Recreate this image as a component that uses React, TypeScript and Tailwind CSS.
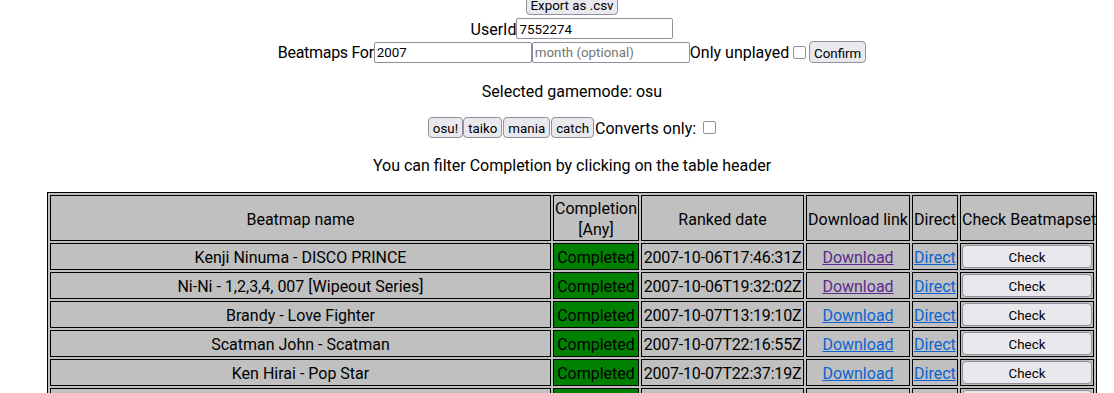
const rows = [
  { name: "Kenji Ninuma - DISCO PRINCE", date: "2007-10-06T17:46:31Z", visited: true },
  { name: "Ni-Ni - 1,2,3,4, 007 [Wipeout Series]", date: "2007-10-06T19:32:02Z", visited: true },
  { name: "Brandy - Love Fighter", date: "2007-10-07T13:19:10Z", visited: false },
  { name: "Scatman John - Scatman", date: "2007-10-07T22:16:55Z", visited: false },
  { name: "Ken Hirai - Pop Star", date: "2007-10-07T22:37:19Z", visited: false },
  { name: "Ayumi Hamasaki - Boys & Girls", date: "2007-10-08T01:05:44Z", visited: false },
];

const btn =
  "bg-[#e9e9ed] border border-[#8f8f9d] rounded-[4px] text-[13.33px] leading-[17px] text-black whitespace-nowrap pt-[2px]";
const inp =
  "border border-[#8f8f9d] rounded-[2px] bg-white h-[21px] text-[13.33px] px-[2px] pt-[1px] text-black placeholder:text-[#757575] outline-none";
const cell = "border border-black px-[1px] pt-[2px] pb-0";

function Box() {
  return <span className="inline-block w-[13px] h-[13px] border border-[#8f8f9d] rounded-[2px] bg-white" />;
}

export default function App() {
  return (
    <div className="w-full h-[393px] overflow-hidden bg-white">
      <div
        className="w-[1144px] text-center text-black text-[16px] leading-[21px]"
        style={{ fontFamily: "Roboto, 'Liberation Sans', sans-serif" }}
      >
        {/* top controls */}
        <div className="-mt-[6px] h-[21px] flex justify-center">
          <button className={btn + " h-[21px] w-[92px] shrink-0"}>Export as .csv</button>
        </div>
        <div className="h-[22px] mt-[3px] flex justify-center items-start">
          <span className="leading-[21px] pt-[1px]">UserId</span>
          <input className={inp + " w-[157px]"} defaultValue="7552274" />
        </div>
        <div className="h-[24px] flex justify-center items-center">
          <span className="tracking-[-0.3px] pt-[1px]">Beatmaps For</span>
          <input className={inp + " w-[158px]"} defaultValue="2007" />
          <input className={inp + " w-[158px]"} placeholder="month (optional)" />
          <span className="pt-[1px]">Only unplayed</span>
          <span className="ml-[4px] mr-[3px] flex">
            <Box />
          </span>
          <button className={btn + " h-[22px] w-[57px] pt-[1px]"}>Confirm</button>
        </div>

        <p className="mt-[17px]">Selected gamemode: osu</p>

        <div className="mt-[15px] h-[21px] flex justify-center items-center">
          <button className={btn + " h-[21px] px-[4px]"}>osu!</button>
          <button className={btn + " h-[21px] px-[4px]"}>taiko</button>
          <button className={btn + " h-[21px] px-[4px] ml-[1px]"}>mania</button>
          <button className={btn + " h-[21px] px-[4px] ml-[1px]"}>catch</button>
          <span className="ml-[1px] pt-[1px]">Converts only:</span>
          <span className="ml-[7px] flex">
            <Box />
          </span>
        </div>

        <p className="mt-[17px]">You can filter Completion by clicking on the table header</p>

        <table className="mt-[16px] mx-auto w-[1050px] table-fixed border border-black border-separate border-spacing-[2px] bg-[#c0c0c0]">
          <thead>
            <tr className="h-[46px]">
              <th className={cell + " w-[501px] font-normal"}>Beatmap name</th>
              <th className={cell + " w-[86px] font-normal"}>Completion [Any]</th>
              <th className={cell + " w-[163px] font-normal whitespace-nowrap"}>Ranked date</th>
              <th className={cell + " w-[104px] font-normal whitespace-nowrap"}>Download link</th>
              <th className={cell + " w-[46px] font-normal whitespace-nowrap"}>Direct</th>
              <th className={cell + " w-[134px] font-normal whitespace-nowrap"}>Check Beatmapset</th>
            </tr>
          </thead>
          <tbody>
            {rows.map((r) => (
              <tr key={r.date} className="h-[27px]">
                <td className={cell + " whitespace-nowrap"}>{r.name}</td>
                <td className={cell + " bg-[#008000] whitespace-nowrap"}>Completed</td>
                <td className={cell + " whitespace-nowrap tracking-[-0.2px]"}>{r.date}</td>
                <td className={cell}>
                  <a
                    href="#"
                    className={"underline " + (r.visited ? "text-[#5b2a8e]" : "text-[#0b63d1]")}
                  >
                    Download
                  </a>
                </td>
                <td className={cell + " text-left whitespace-nowrap"}>
                  <a href="#" className="underline text-[#0b63d1]">
                    Direct
                  </a>
                </td>
                <td className="border border-black p-[1px]">
                  <button className={btn + " w-full h-[23px] block"}>Check</button>
                </td>
              </tr>
            ))}
          </tbody>
        </table>
      </div>
    </div>
  );
}
